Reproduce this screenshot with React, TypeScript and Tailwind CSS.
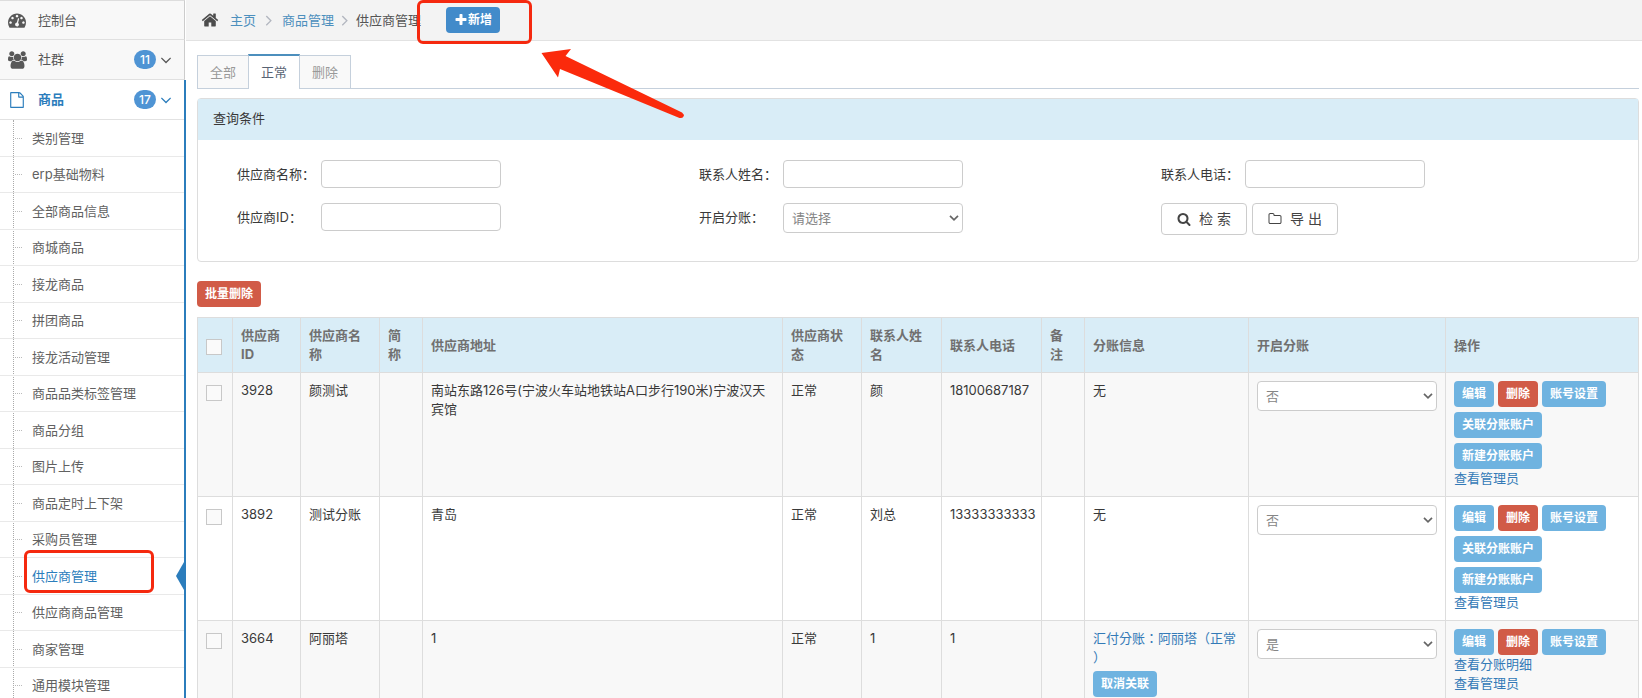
import type { ReactNode } from "react";

const ICONS = {
  dashboard: "M384 1152q0-53-37.5-90.5t-90.5-37.5-90.5 37.5-37.5 90.5 37.5 90.5 90.5 37.5 90.5-37.5 37.5-90.5zm192-448q0-53-37.5-90.5t-90.5-37.5-90.5 37.5-37.5 90.5 37.5 90.5 90.5 37.5 90.5-37.5 37.5-90.5zm428 481l101-382q6-26-7.5-48.5t-38.5-29.5-48 6.5-30 39.5l-101 382q-60 5-107 43.5t-63 98.5q-20 77 20 146t117 89 146-20 89-117q16-60-6-117t-72-91zm660-33q0-53-37.5-90.5t-90.5-37.5-90.5 37.5-37.5 90.5 37.5 90.5 90.5 37.5 90.5-37.5 37.5-90.5zm-640-640q0-53-37.5-90.5t-90.5-37.5-90.5 37.5-37.5 90.5 37.5 90.5 90.5 37.5 90.5-37.5 37.5-90.5zm448 192q0-53-37.5-90.5t-90.5-37.5-90.5 37.5-37.5 90.5 37.5 90.5 90.5 37.5 90.5-37.5 37.5-90.5zm320 448q0 261-141 483-19 29-54 29h-1402q-35 0-54-29-141-221-141-483 0-182 71-348t191-286 286-191 348-71 348 71 286 191 191 286 71 348z",
  group: "M593 896q-162 5-265 128h-134q-82 0-138-40.5t-56-118.5q0-353 124-353 6 0 43.5 21t97.5 42.5 119 21.5q67 0 133-23-5 37-5 66 0 139 81 256zm1071 637q0 120-73 189.5t-194 69.5h-874q-121 0-194-69.5t-73-189.5q0-53 3.5-103.5t14-109 26.5-108.5 43-97.5 62-81 85.5-53.5 111.5-20q10 0 43 21.5t73 48 107 48 135 21.5 135-21.5 107-48 73-48 43-21.5q61 0 111.5 20t85.5 53.5 62 81 43 97.5 26.5 108.5 14 109 3.5 103.5zm-1024-1277q0 106-75 181t-181 75-181-75-75-181 75-181 181-75 181 75 75 181zm704 384q0 159-112.5 271.5t-271.5 112.5-271.5-112.5-112.5-271.5 112.5-271.5 271.5-112.5 271.5 112.5 112.5 271.5zm576 225q0 78-56 118.5t-138 40.5h-134q-103-123-265-128 81-117 81-256 0-29-5-66 66 23 133 23 59 0 119-21.5t97.5-42.5 43.5-21q124 0 124 353zm-128-609q0 106-75 181t-181 75-181-75-75-181 75-181 181-75 181 75 75 181z",
  file: "M1596 380q28 28 48 76t20 88v1152q0 40-28 68t-68 28h-1344q-40 0-68-28t-28-68v-1600q0-40 28-68t68-28h896q40 0 88 20t76 48zm-444-244v376h376q-10-29-22-41l-313-313q-12-12-41-22zm384 1528v-1024h-416q-40 0-68-28t-28-68v-416h-768v1536h1280z",
  home: "M1472 992v480q0 26-19 45t-45 19h-384v-384h-256v384h-384q-26 0-45-19t-19-45v-480q0-1 .5-3t.5-3l575-474 575 474q1 2 1 6zm223-69l-62 74q-8 9-21 11h-3q-13 0-21-7l-692-577-692 577q-12 8-24 7-13-2-21-11l-62-74q-8-10-7-23.5t11-21.5l719-599q32-26 76-26t76 26l244 204v-195q0-14 9-23t23-9h192q14 0 23 9t9 23v408l219 182q10 8 11 21.5t-7 23.5z",
  plus: "M1600 736v192q0 40-28 68t-68 28h-416v416q0 40-28 68t-68 28h-192q-40 0-68-28t-28-68v-416h-416q-40 0-68-28t-28-68v-192q0-40 28-68t68-28h416v-416q0-40 28-68t68-28h192q40 0 68 28t28 68v416h416q40 0 68 28t28 68z",
  search: "M1216 832q0-185-131.5-316.5t-316.5-131.5-316.5 131.5-131.5 316.5 131.5 316.5 316.5 131.5 316.5-131.5 131.5-316.5zm512 832q0 52-38 90t-90 38q-54 0-90-38l-343-342q-179 124-399 124-143 0-273.5-55.5t-225-150-150-225-55.5-273.5 55.5-273.5 150-225 225-150 273.5-55.5 273.5 55.5 225 150 150 225 55.5 273.5q0 220-124 399l343 343q37 37 37 90z",
  folder: "M1600 1312v-704q0-40-28-68t-68-28h-704q-40 0-68-28t-28-68v-64q0-40-28-68t-68-28h-320q-40 0-68 28t-28 68v960q0 40 28 68t68 28h1216q40 0 68-28t28-68zm128-704v704q0 92-66 158t-158 66h-1216q-92 0-158-66t-66-158v-960q0-92 66-158t158-66h320q92 0 158 66t66 158v32h672q92 0 158 66t66 158z",
  angleDown: "M1395 736q0 13-10 23l-466 466q-10 10-23 10t-23-10l-466-466q-10-10-10-23t10-23l50-50q10-10 23-10t23 10l393 393 393-393q10-10 23-10t23 10l50 50q10 10 10 23z",
  angleRight: "M1171 960q0 13-10 23l-466 466q-10 10-23 10t-23-10l-50-50q-10-10-10-23t10-23l393-393-393-393q-10-10-10-23t10-23l50-50q10-10 23-10t23 10l466 466q10 10 10 23z",
};

type IconName = keyof typeof ICONS;

function Icon({ name, className }: { name: IconName; className: string }) {
  return (
    <svg viewBox={name === "group" ? "0 0 1920 1792" : "0 0 1792 1792"} fill="currentColor" className={className} aria-hidden="true">
      <path d={ICONS[name]} />
    </svg>
  );
}

const subItems = [
  "类别管理", "erp基础物料", "全部商品信息", "商城商品", "接龙商品", "拼团商品", "接龙活动管理", "商品品类标签管理",
  "商品分组", "图片上传", "商品定时上下架", "采购员管理", "供应商管理", "供应商商品管理", "商家管理", "通用模块管理",
];

const current = "供应商管理";

const rows = [
  { id: "3928", name: "颜测试", address: "南站东路126号(宁波火车站地铁站A口步行190米)宁波汉天宾馆", contact: "颜", phone: "18100687187", linked: false },
  { id: "3892", name: "测试分账", address: "青岛", contact: "刘总", phone: "13333333333", linked: false },
  { id: "3664", name: "阿丽塔", address: "1", contact: "1", phone: "1", linked: true },
];

function MenuItem({ icon, label, count, active }: { icon: IconName; label: string; count?: number; active?: boolean }) {
  return (
    <a
      href="#"
      className={
        active
          ? "flex h-10 items-center border-b border-[#e2e2e2] bg-white pr-[9px] font-bold text-[#2b7dbc]"
          : "flex h-10 items-center border-r border-b border-[#ccc] border-b-[#e0e0e0] bg-[#f8f8f8] pr-[9px] text-[#585858] first:border-t first:border-t-[#ddd]"
      }
    >
      <span className="flex w-[38px] justify-center pr-1">
        <Icon name={icon} className={icon === "file" ? "h-4 w-4" : icon === "group" ? "h-[18px] w-[19px]" : "h-[18px] w-[18px]"} />
      </span>
      <span className="flex-1">{label}</span>
      {count && (
        <>
          <span className="mr-px flex h-[19px] w-[22px] items-center justify-center rounded-full bg-[#4f94d4] text-xs font-medium text-white">{count}</span>
          <Icon name="angleDown" className="h-[18px] w-[18px]" />
        </>
      )}
    </a>
  );
}

function Sidebar() {
  return (
    <aside className="flex w-[186px] shrink-0 flex-col">
      <nav className="pr-px">
        <MenuItem icon="dashboard" label="控制台" />
        <MenuItem icon="group" label="社群" count={11} />
      </nav>
      <nav className="flex-1 border-r-2 border-[#2b7dbc]">
        <MenuItem icon="file" label="商品" count={17} active />
        <ul className="relative before:absolute before:inset-y-0 before:left-[13px] before:border-l before:border-dotted before:border-[#aaa]">
          {subItems.map(item => (
            <li key={item} className="relative flex items-center border-b border-[#e9e9e9] odd:h-[37px] even:h-9">
              <span className="ml-[15px] w-[7px] border-t border-dotted border-[#bbb]" />
              <a href="#" className={item === current ? "ml-[10px] text-[#2b7dbc]" : "ml-[10px] text-[#616161]"}>{item}</a>
              {item === current && (
                <>
                  <span className="absolute -top-2 left-6 h-[43px] w-[130px] rounded-md border-3 border-[#f5290f]" />
                  <svg viewBox="0 0 8 28" className="absolute top-1 right-0 h-7 w-2" aria-hidden="true">
                    <path d="M8 0 0 14l8 14z" fill="#2b7dbc" />
                  </svg>
                </>
              )}
            </li>
          ))}
        </ul>
      </nav>
    </aside>
  );
}

function Breadcrumb() {
  return (
    <header className="relative flex h-[41px] items-center border-b border-[#e2e2e2] bg-[#f3f3f3] pl-[15px]">
      <Icon name="home" className="h-[18px] w-[18px] text-[#4c4c4c]" />
      <a href="#" className="ml-[11px] text-[#4c8fbd]">主页</a>
      <Icon name="angleRight" className="mx-[4px] h-[18px] w-[18px] text-[#b2b6bf]" />
      <a href="#" className="text-[#4c8fbd]">商品管理</a>
      <Icon name="angleRight" className="mx-[2px] h-[18px] w-[18px] text-[#b2b6bf]" />
      <span className="text-[#555]">供应商管理</span>
      <button className="ml-[25px] flex h-[26px] w-[54px] items-center justify-center rounded-sm bg-[#428bca] text-xs font-bold text-white">
        <Icon name="plus" className="h-[14px] w-[14px]" />新增
      </button>
      {/* callout frame and arrow over the add button */}
      <span className="absolute top-0 left-[231px] h-[44px] w-[115px] rounded-md border-3 border-[#f5290f]" />
      <svg viewBox="0 0 146 72" className="absolute top-[48px] left-[354px] z-10 h-[72px] w-[146px]" aria-hidden="true">
        <path d="M1.500 5 31 1l-5.500 7L142 64.500q2.500 2 1.500 4t-4 1.500L20 21l-2 8.500z" fill="#fb2a0c" />
      </svg>
    </header>
  );
}

function Tabs() {
  return (
    <div role="tablist" className="flex h-[35px] items-end">
      <button role="tab" className="h-[34px] w-[51px] border border-r-0 border-[#c5d0dc] bg-[#f9f9f9] text-[#999]">全部</button>
      <button role="tab" aria-selected="true" className="h-[35px] w-[52px] border-x border-t-2 border-[#c5d0dc] border-t-[#4c8fbd] bg-white text-[#576373]">正常</button>
      <button role="tab" className="h-[34px] w-[51px] border border-l-0 border-[#c5d0dc] bg-[#f9f9f9] text-[#999]">删除</button>
      <span className="flex-1 border-b border-[#c5d0dc]" />
    </div>
  );
}

function Select({ id, label, options }: { id: string; label?: string; options: string[] }) {
  return (
    <div className="relative w-[180px]">
      <select id={id} aria-label={label} className="block h-[30px] w-full appearance-none rounded border border-[#ccc] bg-white pl-2 text-[#858585]">
        {options.map(o => <option key={o}>{o}</option>)}
      </select>
      <svg viewBox="0 0 10 6" className="pointer-events-none absolute top-3 right-1 h-[6px] w-[10px]" aria-hidden="true">
        <path d="M1 .8 5 4.800 9 .8" fill="none" stroke="#666" strokeWidth="1.700" />
      </svg>
    </div>
  );
}

function Field({ id, label, children }: { id: string; label: string; children?: ReactNode }) {
  return (
    <div className="flex items-start">
      <label htmlFor={id} className="w-[84px] leading-7 text-[#393939]">{label}：</label>
      {children ?? <input id={id} type="text" className="h-7 w-[180px] rounded border border-[#ccc] bg-white px-2" />}
    </div>
  );
}

function SearchButton({ icon, children }: { icon: IconName; children: ReactNode }) {
  return (
    <button type="button" className="flex h-8 w-[86px] items-center justify-center gap-2 rounded border border-[#ccc] bg-white text-sm text-[#444]">
      <Icon name={icon} className="h-[14px] w-[14px]" />
      <span className="whitespace-pre">{children}</span>
    </button>
  );
}

function SearchPanel() {
  return (
    <form className="mt-[9px] rounded border border-[#ddd] bg-white">
      <h2 className="h-[41px] bg-[#d9edf7] px-[15px] leading-[38px] text-[#393939]">查询条件</h2>
      <div className="grid grid-cols-3 gap-y-[15px] px-[27px] pt-[20px] pb-[26px]">
        <div className="px-3"><Field id="name" label="供应商名称" /></div>
        <div className="px-3"><Field id="contact" label="联系人姓名" /></div>
        <div className="px-3"><Field id="phone" label="联系人电话" /></div>
        <div className="px-3"><Field id="sid" label="供应商ID" /></div>
        <div className="px-3">
          <Field id="split" label="开启分账"><Select id="split" options={["请选择", "是", "否"]} /></Field>
        </div>
        <div className="flex gap-[5px] px-3">
          <SearchButton icon="search">检 索</SearchButton>
          <SearchButton icon="folder">导 出</SearchButton>
        </div>
      </div>
    </form>
  );
}

function SmallButton({ danger, children }: { danger?: boolean; children: ReactNode }) {
  return (
    <button className={danger ? "h-[26px] rounded-sm bg-[#d15b47] px-2 text-xs font-bold text-white" : "h-[26px] rounded-sm bg-[#6fb3e0] px-2 text-xs font-bold text-white"}>
      {children}
    </button>
  );
}

function Checkbox({ label }: { label: string }) {
  return <input type="checkbox" aria-label={label} className="mt-1 block h-4 w-4 appearance-none border border-[#c8c8c8] bg-[#fafafa]" />;
}

function SupplierTable() {
  return (
    <table className="mt-[10px] w-full table-fixed border-collapse text-[#393939] [&_td]:border [&_td]:border-[#ddd] [&_td]:p-2 [&_td]:align-top [&_th]:border [&_th]:border-[#ddd] [&_th]:p-2 [&_th]:text-left">
      <colgroup>
        <col className="w-[35px]" />
        <col className="w-[68px]" />
        <col className="w-[79px]" />
        <col className="w-[43px]" />
        <col />
        <col className="w-[79px]" />
        <col className="w-[80px]" />
        <col className="w-[100px]" />
        <col className="w-[43px]" />
        <col className="w-[164px]" />
        <col className="w-[197px]" />
        <col className="w-[193px]" />
      </colgroup>
      <thead>
        <tr className="bg-[#d9edf7] text-[#707070]">
          <th><Checkbox label="全选" /></th>
          <th>供应商ID</th>
          <th>供应商名称</th>
          <th>简<br />称</th>
          <th>供应商地址</th>
          <th>供应商状态</th>
          <th>联系人姓名</th>
          <th>联系人电话</th>
          <th>备<br />注</th>
          <th>分账信息</th>
          <th>开启分账</th>
          <th>操作</th>
        </tr>
      </thead>
      <tbody>
        {rows.map(row => (
          <tr key={row.id} className="odd:bg-[#f8f8f8] even:bg-white">
            <td><Checkbox label={row.name} /></td>
            <td>{row.id}</td>
            <td>{row.name}</td>
            <td />
            <td>{row.address}</td>
            <td>正常</td>
            <td>{row.contact}</td>
            <td>{row.phone}</td>
            <td />
            <td>
              {row.linked ? (
                <>
                  <a href="#" className="mb-1 block font-[Inter,'Noto_Sans_CJK_TC',sans-serif] text-[#337ab7] [line-break:anywhere]">汇付分账：阿丽塔（正常）</a>
                  <SmallButton>取消关联</SmallButton>
                </>
              ) : "无"}
            </td>
            <td><Select id={`split-${row.id}`} label="开启分账" options={row.linked ? ["是", "否"] : ["否", "是"]} /></td>
            <td>
              <div className="flex flex-wrap gap-x-1 gap-y-[5px]">
                <SmallButton>编辑</SmallButton>
                <SmallButton danger>删除</SmallButton>
                <SmallButton>账号设置</SmallButton>
                {!row.linked && (
                  <div className="flex w-full flex-col items-start gap-[5px]">
                    <SmallButton>关联分账账户</SmallButton>
                    <SmallButton>新建分账账户</SmallButton>
                  </div>
                )}
              </div>
              {row.linked && <a href="#" className="block text-[#337ab7]">查看分账明细</a>}
              <a href="#" className="block text-[#337ab7]">查看管理员</a>
            </td>
          </tr>
        ))}
      </tbody>
    </table>
  );
}

export default function App() {
  return (
    <div className="flex h-screen overflow-hidden bg-white font-[Inter,'Noto_Sans_CJK_SC',sans-serif] text-[13px] leading-[19px]">
      <Sidebar />
      <main className="min-w-0 flex-1">
        <Breadcrumb />
        <div className="pt-[13px] pr-[3px] pl-[11px]">
          <Tabs />
          <SearchPanel />
          <div className="mt-[19px] flex"><SmallButton danger>批量删除</SmallButton></div>
          <SupplierTable />
        </div>
      </main>
    </div>
  );
}
